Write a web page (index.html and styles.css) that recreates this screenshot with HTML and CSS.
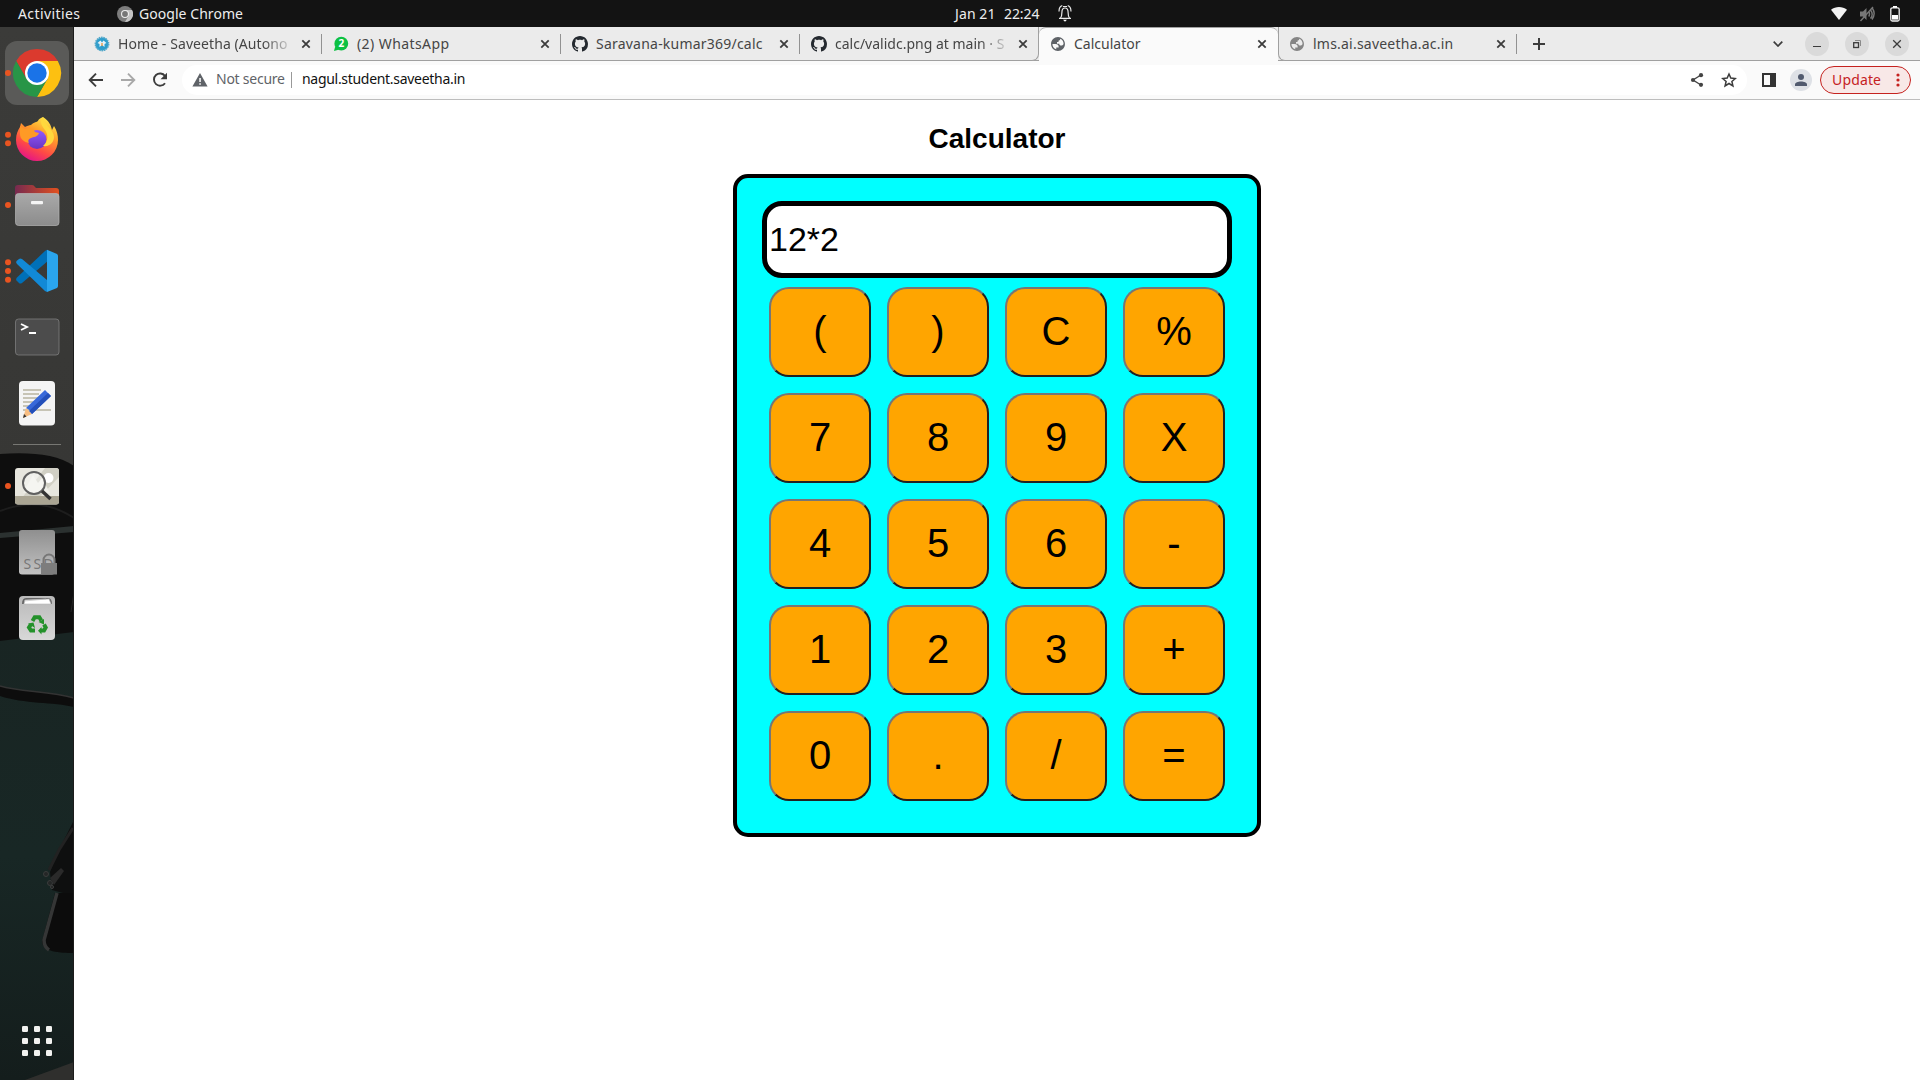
FILE: index.html
```html
<!DOCTYPE html>
<html lang="en">
<head>
<meta charset="utf-8">
<title>Calculator</title>
<link rel="stylesheet" href="styles.css">
</head>
<body>
<svg class="defs" width="0" height="0">
  <defs>
    <linearGradient id="ff" x1=".8" y1="0" x2=".3" y2="1"><stop offset="0" stop-color="#fff44f"/><stop offset=".35" stop-color="#ffa02a"/><stop offset=".7" stop-color="#ff4a45"/><stop offset="1" stop-color="#e3128a"/></linearGradient>
    <linearGradient id="ffo" x1="0" y1="0" x2="0" y2="1"><stop offset="0" stop-color="#9059ff"/><stop offset="1" stop-color="#6a35c0"/></linearGradient>
    <linearGradient id="grey" x1="0" y1="0" x2="0" y2="1"><stop offset="0" stop-color="#a9a9a9"/><stop offset="1" stop-color="#8c8c8c"/></linearGradient>
    <linearGradient id="light" x1="0" y1="0" x2="0" y2="1"><stop offset="0" stop-color="#b9b9b9"/><stop offset="1" stop-color="#d8d8d8"/></linearGradient>
    <linearGradient id="ssd" x1="0" y1="0" x2="0" y2="1"><stop offset="0" stop-color="#8f8f8f"/><stop offset="1" stop-color="#c2c2c2"/></linearGradient>
    <linearGradient id="fold" x1="0" y1="0" x2="1" y2="0"><stop offset="0" stop-color="#762a50"/><stop offset="1" stop-color="#e2511f"/></linearGradient>
    <linearGradient id="dark" x1="0" y1="0" x2="0" y2="1"><stop offset="0" stop-color="#3b3b39"/><stop offset="1" stop-color="#373735"/></linearGradient>
    <linearGradient id="teal" x1="0" y1="0" x2="0" y2="1"><stop offset="0" stop-color="#192523"/><stop offset=".5" stop-color="#182725"/><stop offset="1" stop-color="#141d1c"/></linearGradient>
    <symbol id="close" viewBox="0 0 10 10"><path d="M1.3 1.3l7.4 7.4M8.7 1.3L1.3 8.7" fill="none" stroke="#3c3c3c" stroke-width="1.8"/></symbol>
    <symbol id="github" viewBox="0 0 16 16"><path fill="#24292f" d="M8 0C3.58 0 0 3.58 0 8c0 3.54 2.29 6.53 5.47 7.59.4.07.55-.17.55-.38 0-.19-.01-.82-.01-1.49-2.01.37-2.53-.49-2.69-.94-.09-.23-.48-.94-.82-1.13-.28-.15-.68-.52-.01-.53.63-.01 1.08.58 1.23.82.72 1.21 1.87.87 2.33.66.07-.52.28-.87.51-1.07-1.78-.2-3.64-.89-3.64-3.95 0-.87.31-1.59.82-2.15-.08-.2-.36-1.02.08-2.12 0 0 .67-.21 2.2.82.64-.18 1.32-.27 2-.27s1.36.09 2 .27c1.53-1.04 2.2-.82 2.2-.82.44 1.1.16 1.92.08 2.12.51.56.82 1.27.82 2.15 0 3.07-1.87 3.75-3.65 3.95.29.25.54.73.54 1.48 0 1.07-.01 1.93-.01 2.2 0 .21.15.46.55.38A8.01 8.01 0 0016 8c0-4.42-3.58-8-8-8z"/></symbol>
    <symbol id="globe" viewBox="0.500 0.500 23 23"><path fill="currentColor" d="M12 2C6.480 2 2 6.480 2 12s4.480 10 10 10 10-4.480 10-10S17.520 2 12 2zM4 12h4.400c3.407.022 4.922 1.730 4.543 5.127H9.488v2.470A8.004 8.004 0 0 1 4 12zm16 0c-1 1.600-2 2.200-3.300 2.200-2 0-2.900-1-2.900-2.600h-3.200V9.100c2 0 2.500-.5 2.500-1.400V6.500h1.900V4.550A8 8 0 0 1 20 12z"/></symbol>
  </defs>
</svg>

<div class="desktop">
  <header class="topbar">
    <div class="top-left">
      <span class="activities">Activities</span>
      <svg width="16" height="16" viewBox="0 0 16 16"><circle cx="8" cy="8" r="8" fill="#7d7d7d"/><path d="M8 4h7a8 8 0 01-7 12l3.500-6z" fill="#c4c4c4"/><circle cx="8" cy="8" r="4" fill="#eee"/><circle cx="8" cy="8" r="2.900" fill="#777"/></svg>
      <span class="app-name">Google Chrome</span>
    </div>
    <div class="clock"><span>Jan 21</span><span>22:24</span>
      <svg width="14" height="17" viewBox="0 0 14 17" fill="none" stroke="#e8e8e8" stroke-width="1.200"><path d="M1 13.400h12M2.500 13c1.200-1.500 1.400-3 1.400-5.500 0-3 1-4.500 3.100-4.500s3.100 1.500 3.100 4.500c0 2.500.2 4 1.400 5.500M1 6.500C1.100 3 2.500 1 4.300.7M13 6.500C12.900 3 11.500 1 9.700.7M5 1.500h4"/><path d="M5 14.800h4l-2 2z" fill="#fff" stroke="none"/></svg>
    </div>
    <div class="tray">
      <svg width="16" height="13" viewBox="0 0 16 13"><path d="M0 2.800C4.600-.9 11.400-.9 16 2.800L8 13z" fill="#f2f2f2"/></svg>
      <svg class="muted" width="16" height="16" viewBox="0 0 16 16" fill="none" stroke="#777" stroke-width="1.400"><path d="M1 5.500h3L7.500 2v12L4 10.500H1z" fill="#777" stroke="none"/><path d="M14 1L1.500 15M9.700 5.500c1 1.500 1 3.500 0 5M11.500 4c2 2.500 2 6 0 8.500M13.500 2.500c2 3 2 7.500-.5 11"/></svg>
      <svg width="10" height="16" viewBox="0 0 10 16"><path d="M3 0h4v2H3z" fill="#fff"/><rect x=".8" y="1.800" width="8.400" height="13.200" rx="1.500" fill="none" stroke="#f2f2f2" stroke-width="1.300"/><path d="M2 9h6v4.600H2z" fill="#fff"/></svg>
    </div>
  </header>

  <div class="workspace">
    <nav class="dock">
      <svg class="wallpaper" width="74" height="1053" viewBox="0 27 74 1053">
        <path d="M0 27h74v440H0z" fill="url(#dark)"/>
        <path d="M0 454c30-2 57 0 74 12v190H0z" fill="#0e0e0e"/>
        <path d="M0 511c28-11 51-8 74 7" fill="none" stroke="#1d1d1d" stroke-width="2"/>
        <path d="M0 533l74-7v6L0 538z" fill="#2b3130"/>
        <path d="M74 592l-3 20" stroke="#242424"/>
        <path d="M0 641l74-9v448H0z" fill="url(#teal)"/>
        <path d="M0 686c20 6 50 5 74 12v9c-20-5-50-3-74-11z" fill="#0d0d0d"/>
        <path d="M0 686c20 6 50 5 74 12" fill="none" stroke="#333" stroke-width="1.500"/>
        <path d="M74 820L58 852l-8 20 2 18 22 6z" fill="#0e0f0f"/>
        <path d="M73 828L59 850l-10 20" fill="none" stroke="#222" stroke-width="3"/>
        <g fill="#242626" stroke="#3a3c3c"><circle cx="46" cy="874" r="2.500"/><circle cx="50" cy="883" r="2.500"/><circle cx="52" cy="887" r="1.600"/></g>
        <path d="M50 878l11-10 3 3-10 14z" fill="#2a2a2a"/>
        <path d="M55 893h19v60c-14 0-32-1-32-12z" fill="#0c0c0c"/>
        <path d="M57 893L44 940c0 6 2 8 5 10" fill="none" stroke="#353636" stroke-width="3.500"/>
        <path d="M25 1080l49-18v18z" fill="#2f2f2d"/>
        <path d="M73.500 27v1053" stroke="#1c1c1b"/>
      </svg>
      <div class="dock-item current"><svg viewBox="0 0 64 64"><circle cx="3" cy="32" r="3" fill="#e95420"/><path d="M11.200 20A24 24 0 0152.800 20H32L21.600 38z" fill="#db3a2e"/><path d="M52.800 20A24 24 0 0132 56L42.400 38 32 20z" fill="#fdc011"/><path d="M11.200 20A24 24 0 0032 56L42.400 38H21.600z" fill="#289547"/><circle cx="32" cy="32" r="12" fill="#fff"/><circle cx="32" cy="32" r="9.700" fill="#1a73e8"/></svg></div>
      <div class="dock-item"><svg viewBox="0 0 64 64"><g fill="#e95420"><circle cx="3" cy="27.700" r="3"/><circle cx="3" cy="36.300" r="3"/></g><path d="M38 10c6 4 8 8 9 13l2-4c3 5 4 9 4 14a21 21 0 01-42 0c0-6 2-10 4-13l1-4 4 4c2-1 4-2 6-2 3-3 6-3 7-4 0-1 2-3 5-4z" fill="url(#ff)"/><circle cx="32" cy="32.500" r="9.500" fill="url(#ffo)"/><path d="M15 19l5 3c5-2 8-1 10 3l4 1c-1 4-6 4-8 5-3 1-3 3-2 5-5-1-9-4-9-9z" fill="#ff9a25"/><path d="M38 10c-4 5-1 9 2 13s4 11-2 16c7 1 11-4 11-9 0-7-9-11-11-20z" fill="#ffd83d"/></svg></div>
      <div class="dock-item"><svg viewBox="0 0 64 64"><circle cx="3" cy="32" r="3" fill="#e95420"/><path d="M10 15a3 3 0 013-3h14q2 0 3 2l1 1h20a3 3 0 013 3v15H10z" fill="url(#fold)"/><rect x="10.500" y="20.500" width="43.500" height="32" rx="3" fill="url(#grey)" stroke="#b5b5b5" stroke-width=".7"/><rect x="26" y="28" width="12" height="3.300" rx="1" fill="#f5f5f5"/></svg></div>
      <div class="dock-item"><svg viewBox="0 0 64 64"><g fill="#e95420"><circle cx="3" cy="23.300" r="3"/><circle cx="3" cy="32" r="3"/><circle cx="3" cy="40.700" r="3"/></g><path d="M42 10.700v12L17 44q-2 1-3 0l-2.500-2.500q-1-1.500.5-3L40 12z" fill="#0070b8"/><path d="M42 53V41L17 20q-2-1-3 0l-2.500 2q-1 1.500.5 3L40 52z" fill="#1289d6"/><path d="M42 10.700L52 15q1 1 1 2v30q0 1-1 2l-10 4z" fill="#2aa5ee"/></svg></div>
      <div class="dock-item"><svg viewBox="0 0 64 64"><rect x="10.500" y="14" width="43.500" height="36" rx="3" fill="#4c4c4c" stroke="#777" stroke-width=".9"/><path d="M16 19l6 3-6 3M24 28h7" fill="none" stroke="#fff" stroke-width="1.900"/></svg></div>
      <div class="dock-item"><svg viewBox="0 0 64 64"><rect x="14" y="10" width="36" height="44.500" rx="4" fill="#f4f4f4"/><path d="M18 19h18M18 23h16M18 27h15M18 31h12M18 35h9M18 39h28" stroke="#c7c4b5" stroke-width="1.900"/><path d="M18 47l3-10 6 6z" fill="#f7bd82"/><path d="M18 47l1-4 2.500 2.500z" fill="#333"/><path d="M21 37l19-18 6 6-19 18q-1-4-6-6z" fill="#3768d9"/><path d="M24 40l19-18 3 3-19 18z" fill="#234fb9"/></svg></div>
      <div class="dock-line"></div>
      <div class="dock-item"><svg viewBox="0 0 64 64"><circle cx="3" cy="32" r="3" fill="#e95420"/><rect x="10" y="14" width="44" height="36.500" rx="3" fill="#e7e6de"/><path d="M40 14h11q3 0 3 3v6L34 44H17z" fill="#d1d0c5"/><path d="M18 39l10-18 5 8 4-5 8 15z" fill="#eeeee8"/><path d="M10 42h44v5.500q0 3-3 3H13q-3 0-3-3z" fill="#aaa593"/><circle cx="43.500" cy="24" r="5" fill="#fff"/><circle cx="29" cy="29" r="11" fill="#fff" fill-opacity=".4" stroke="#606060" stroke-width="2"/><path d="M37 37l8.500 8" stroke="#333" stroke-width="3.500"/></svg></div>
      <div class="dock-item"><svg viewBox="0 0 64 64"><rect x="14" y="10" width="36" height="44.500" rx="3" fill="url(#ssd)"/><text class="ssd-text" x="18.500" y="49" textLength="30">SSD</text><path d="M38.500 43v-3a5.500 5.500 0 0111 0v3" fill="none" stroke="#777" stroke-width="2"/><rect x="36" y="43" width="16" height="11.500" fill="#7d7d7d"/></svg></div>
      <div class="dock-item"><svg viewBox="0 0 64 64"><rect x="14" y="10" width="36" height="44" rx="4" fill="url(#light)"/><path d="M17 18q0-6 4-6h22q4 0 4 6z" fill="#666"/><path d="M19 18l1-4 24-1 2 5zM19 15l22-2" fill="#fff" stroke="#bbb" stroke-width=".6"/><g fill="none" stroke="#23912a" stroke-width="4"><path d="M27.500 35l2.200-3.800h4.600l2 3.300M39 38.500l1.700 3-1.700 3h-3.500M30 44.500h-4l-2-3 1.800-3"/></g><path d="M33.500 36l5.500-3v5.500zM36.500 41v7.500L33 44.800zM23 37.500l5.500-1 1.500 5.500z" fill="#23912a"/></svg></div>
      <div class="dock-item apps"><svg viewBox="0 0 64 64" fill="#f2f2f0"><rect x="17" y="17" width="6" height="6" rx="1.300"/><rect x="29" y="17" width="6" height="6" rx="1.300"/><rect x="41" y="17" width="6" height="6" rx="1.300"/><rect x="17" y="29" width="6" height="6" rx="1.300"/><rect x="29" y="29" width="6" height="6" rx="1.300"/><rect x="41" y="29" width="6" height="6" rx="1.300"/><rect x="17" y="41" width="6" height="6" rx="1.300"/><rect x="29" y="41" width="6" height="6" rx="1.300"/><rect x="41" y="41" width="6" height="6" rx="1.300"/></svg></div>
    </nav>

    <main class="browser">
      <div class="tabstrip">
        <div class="tab"><svg class="fav" viewBox="0 0 16 16"><circle cx="8" cy="8" r="6.600" fill="#2e9dcc" stroke="#55a8c9" stroke-width="1.600" stroke-dasharray="1.500 .8"/><path d="M3.500 7l3-2.500 1.500 2 1.500-2 3 2.500-2 1v3l-2.500-2L5.500 11V8z" fill="#e6f3f8"/><path d="M7.300 7h1.400v3H7.300z" fill="#e89b4c"/></svg><span class="label t-home">Home - Saveetha (Autono</span><svg class="x"><use href="#close"/></svg></div>
        <div class="tab"><svg class="fav" viewBox="0 0 16 16"><circle cx="8.300" cy="7.700" r="6.900" fill="#0cc143"/><path d="M2.200 10.500L1 15l4.500-1.200z" fill="#0cc143"/><text class="badge" x="5.400" y="11.400">2</text></svg><span class="label t-wa">(2) WhatsApp</span><svg class="x"><use href="#close"/></svg></div>
        <div class="tab"><svg class="fav"><use href="#github"/></svg><span class="label t-repo">Saravana-kumar369/calc</span><svg class="x"><use href="#close"/></svg></div>
        <div class="tab last"><svg class="fav"><use href="#github"/></svg><span class="label t-png">calc/validc.png at main · S</span><svg class="x"><use href="#close"/></svg></div>
        <div class="tab active"><svg class="fav"><use href="#globe"/></svg><span class="label t-calc">Calculator</span><svg class="x"><use href="#close"/></svg></div>
        <div class="tab after"><svg class="fav"><use href="#globe"/></svg><span class="label t-lms">lms.ai.saveetha.ac.in</span><svg class="x"><use href="#close"/></svg></div>
        <div class="strip-end">
          <svg width="12" height="12" viewBox="0 0 12 12"><path d="M6 0v12M0 6h12" stroke="#3c3c3c" stroke-width="2"/></svg>
          <div class="window-controls">
            <svg class="chevron" width="10" height="6" viewBox="0 0 10 6"><path d="M.7.700L5 5 9.300.7" fill="none" stroke="#3c3c3c" stroke-width="1.700"/></svg>
            <span class="round"><svg viewBox="0 0 24 24"><path d="M8 14.500h8" stroke="#3c3c3c"/></svg></span>
            <span class="round"><svg viewBox="0 0 24 24" fill="none"><path d="M10 8.500h5.500V14" stroke="#8a8a8a"/><rect x="8.700" y="10.700" width="4.800" height="4.800" stroke="#3c3c3c" stroke-width="1.300"/></svg></span>
            <span class="round"><svg viewBox="0 0 24 24"><path d="M8.200 8.200l7.600 7.600M15.800 8.200l-7.600 7.600" stroke="#3c3c3c" stroke-width="1.300"/></svg></span>
          </div>
        </div>
      </div>

      <div class="toolbar">
        <div class="nav-icons">
          <svg width="16" height="16" viewBox="0 0 16 16" fill="none" stroke="#3c3c3c" stroke-width="1.900"><path d="M15 8H2.500M8 1.600L1.700 8 8 14.400"/></svg>
          <svg width="16" height="16" viewBox="0 0 16 16" fill="none" stroke="#a8a8a8" stroke-width="1.900"><path d="M1 8h12.500M8 1.600L14.300 8 8 14.400"/></svg>
          <svg width="16" height="16" viewBox="0 0 16 16" fill="none" stroke="#3c3c3c" stroke-width="1.900"><path d="M13 11.200A6.100 6.100 0 1113 4"/><path d="M15 .8v6.500H8.500z" fill="#3c3c3c" stroke="none"/></svg>
        </div>
        <div class="omnibox">
          <svg width="16" height="14" viewBox="0 0 16 14"><path d="M8 0l7.600 13.600H.4z" fill="#5f6368"/><path d="M7.300 5h1.500v4H7.300zM7.300 10.200h1.500v1.500H7.300z" fill="#fff"/></svg>
          <span class="secure">Not secure</span>
          <span class="bar"></span>
          <span class="url">nagul.student.saveetha.in</span>
          <svg class="share" width="14" height="14" viewBox="0 0 14 14"><path d="M11 2L3 7l8 5" fill="none" stroke="#444" stroke-width="1.400"/><g fill="#444"><circle cx="11" cy="2.200" r="2.100"/><circle cx="3" cy="7" r="2.100"/><circle cx="11" cy="11.800" r="2.100"/></g></svg>
          <svg width="16" height="16" viewBox="0 0 16 16"><path d="M8 2l1.800 4.100 4.500.4-3.400 3 1 4.400L8 11.500l-3.900 2.400 1-4.400-3.400-3 4.500-.4z" fill="none" stroke="#3c3c3c" stroke-width="1.500"/></svg>
        </div>
        <div class="actions">
          <svg width="14" height="14" viewBox="0 0 14 14"><path d="M0 0h14v14H0zM2 2v10h6V2z" fill="#333" fill-rule="evenodd"/></svg>
          <svg width="22" height="22" viewBox="0 0 22 22"><circle cx="11" cy="11" r="11" fill="#dee1e6"/><circle cx="11" cy="8" r="3" fill="#515a6e"/><path d="M5 17v-1.500C5 13.400 8 12.500 11 12.500s6 .9 6 3V17z" fill="#515a6e"/></svg>
          <div class="update"><span>Update</span><svg width="4" height="14" viewBox="0 0 4 14" fill="#c5221f"><circle cx="2" cy="2" r="1.600"/><circle cx="2" cy="7" r="1.600"/><circle cx="2" cy="12" r="1.600"/></svg></div>
        </div>
      </div>

      <section class="page">
        <h1>Calculator</h1>
        <div class="calculator">
          <div class="display">12*2</div>
          <div class="keys">
            <button>(</button><button>)</button><button>C</button><button>%</button>
            <button>7</button><button>8</button><button>9</button><button>X</button>
            <button>4</button><button>5</button><button>6</button><button>-</button>
            <button>1</button><button>2</button><button>3</button><button>+</button>
            <button>0</button><button>.</button><button>/</button><button>=</button>
          </div>
        </div>
      </section>
    </main>
  </div>
</div>
</body>
</html>
```

FILE: styles.css
```css
* { box-sizing: border-box; }
body { margin: 0; font-family: "Noto Sans", "Open Sans", sans-serif; overflow: hidden; }
svg { display: block; flex: none; }
.defs { position: absolute; }
.desktop { width: 1920px; height: 1080px; display: flex; flex-direction: column; background: #fff; }

.topbar { height: 27px; flex: none; background: #131313; color: #ededed; display: grid; grid-template-columns: 955px 1fr auto; align-items: center; font-size: 14px; line-height: 26px; white-space: nowrap; }
.top-left { display: flex; align-items: center; padding-left: 18px; }
.activities { width: 99px; letter-spacing: .4px; }
.app-name { margin-left: 6px; letter-spacing: .05px; }
.clock { display: flex; align-items: center; letter-spacing: -.1px; }
.clock span:first-child { width: 49px; letter-spacing: .1px; }
.clock span:nth-child(2) { width: 54px; }
.tray { display: flex; align-items: center; gap: 20px; padding-right: 20px; }
.muted { margin: 0 -5px 0 -8px; }

.workspace { flex: 1; display: flex; min-height: 0; }
.dock { width: 74px; flex: none; position: relative; display: flex; flex-direction: column; align-items: center; gap: 2px; padding: 14px 0 7px; }
.wallpaper { position: absolute; left: 0; top: 0; }
.dock-item { width: 64px; height: 64px; flex: none; border-radius: 12px; position: relative; }
.dock-item svg { width: 64px; height: 64px; }
.current { background: #5a5a58; }
.dock-line { width: 48px; height: 1px; margin: 7px 0; background: #777773; flex: none; position: relative; }
.apps { margin-top: auto; }
.ssd-text { font: 14px "Noto Sans", sans-serif; fill: #777; }

.browser { flex: 1; min-width: 0; display: flex; flex-direction: column; }
.tabstrip { height: 34px; flex: none; background: linear-gradient(#a0a0a0, #a0a0a0) 0 33px / 100% 1px no-repeat #ebebeb; padding-left: 9px; display: flex; }
.tab { width: 239px; flex: none; height: 34px; display: flex; align-items: center; padding-left: 11px; background: linear-gradient(#929292, #929292) 100% 7px / 1px 20px no-repeat; color: #454545; }
.fav { width: 16px; height: 16px; color: #5f6368; }
.label { margin-left: 8px; width: 176px; flex: none; overflow: hidden; white-space: nowrap; font-size: 14px; line-height: 20px; }
.t-home { letter-spacing: .08px; }
.t-home, .t-png { -webkit-mask-image: linear-gradient(90deg, #000 145px, transparent 177px); mask-image: linear-gradient(90deg, #000 145px, transparent 177px); }
.t-wa { letter-spacing: .42px; }
.t-repo { letter-spacing: .22px; }
.t-lms { letter-spacing: .22px; }
.x { width: 10px; height: 10px; margin-left: 7px; }
.badge { font: bold 10px "Noto Sans", sans-serif; fill: #fff; }
.last { border-bottom: 1px solid #a0a0a0; border-right: 1px solid #a0a0a0; border-bottom-right-radius: 7px; background: #ebebeb; padding-top: 1px; }
.active { background: #fafafa; border-top: 1px solid #a0a0a0; border-radius: 7px 7px 0 0; padding-bottom: 1px; }
.after { background: linear-gradient(#929292, #929292) 100% 7px / 1px 20px no-repeat #ebebeb; border-left: 1px solid #a0a0a0; border-bottom: 1px solid #a0a0a0; border-bottom-left-radius: 7px; padding: 1px 0 0 10px; }
.after .fav { color: #858585; }
.strip-end { flex: 1; display: flex; align-items: center; justify-content: space-between; padding: 0 11px 0 16px; }
.window-controls { display: flex; align-items: center; gap: 16px; }
.chevron { margin-right: 6px; }
.round { width: 24px; height: 24px; border-radius: 50%; background: #dadada; }

.toolbar { height: 39px; flex: none; background: #fafafa; border-bottom: 1px solid #bdbdbd; display: flex; align-items: center; padding: 0 9px 0 14px; }
.nav-icons { width: 94px; display: flex; gap: 16px; }
.omnibox { width: 1565px; height: 30px; border-radius: 15px; background: #fff; display: flex; align-items: center; padding: 0 10px; font-size: 14px; line-height: 20px; white-space: nowrap; }
.secure, .url { padding-bottom: 2px; }
.secure { width: 75px; margin-left: 8px; color: #5f6368; letter-spacing: -.25px; }
.bar { width: 1px; height: 16px; background: #999; }
.url { margin-left: 10px; color: #111; letter-spacing: -.3px; }
.share { margin: 0 17px 0 auto; }
.actions { display: flex; align-items: center; margin-left: auto; }
.actions > svg:first-child { margin-right: 14px; }
.update { width: 91px; height: 28px; margin-left: 8px; border: 1px solid #c5221f; border-radius: 14px; background: #f8e8e7; color: #c5221f; display: flex; align-items: center; padding-left: 11px; font-size: 14px; line-height: 20px; letter-spacing: .15px; }
.update span { width: 64px; padding-bottom: 1px; }

.page { flex: 1; background: #fff; display: flex; flex-direction: column; align-items: center; font-family: "Liberation Sans", Arial, sans-serif; }
h1 { margin: 23px 0 19px; font-size: 28px; line-height: 32px; font-weight: 700; color: #000; }
.calculator { width: 528px; height: 663px; flex: none; border: 4px solid #000; border-radius: 15px; background: #0ff; padding: 23px 25px 0; }
.display { height: 77px; border: 5px solid #000; border-radius: 20px; background: #fff; padding: 0 2px; font-size: 34px; line-height: 67px; color: #000; }
.keys { display: grid; grid-template-columns: repeat(4, 102px); grid-auto-rows: 90px; gap: 16px; padding: 9px 0 0 7px; }
.keys button { margin: 0; padding: 0 0 2px; border: 2px solid; border-color: #767676 #212121 #212121 #767676; border-radius: 20px; background: #ffa500; color: #000; font: 40px "Liberation Sans", Arial, sans-serif; }
```
